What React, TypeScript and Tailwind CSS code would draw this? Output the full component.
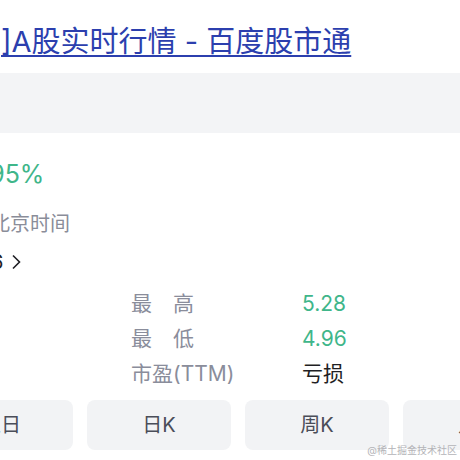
const labelCls = "text-[21px] text-[#8a8d9b]";

const stats = [
  { label: "最\u3000高", value: "5.28", tone: "text-[#3fb68a]" },
  { label: "最\u3000低", value: "4.96", tone: "text-[#3fb68a]" },
  { label: "市盈(TTM)", value: "亏损", tone: "text-[#1f1f24]" },
];

const periods = ["五日", "日K", "周K", "月K"];

export default function App() {
  return (
    <div
      className="relative w-[460px] h-[460px] overflow-hidden bg-white"
      style={{ fontFamily: 'Inter, "Noto Sans CJK SC", sans-serif' }}
    >
      {/* page title link */}
      <div className="h-[73px] pt-[22px] whitespace-nowrap">
        <a className="block ml-[1px] text-[29px] leading-[40px] text-[#2c3fae] underline underline-offset-[3px] decoration-[2px]">
          ]A股实时行情 - 百度股市通
        </a>
      </div>

      {/* search bar */}
      <div className="h-[60px] bg-[#f3f4f6]" />

      <div className="mt-[27px] h-[30px] flex items-center whitespace-nowrap">
        <span className="-ml-[33px] text-[25px] text-[#3fb68a]">0.95%</span>
      </div>

      <div className="mt-[19px] h-[30px] flex items-center whitespace-nowrap">
        <span className="-ml-[10px] text-[20px] text-[#8a8d99]">北京时间</span>
      </div>

      <div className="mt-[8px] h-[30px] flex items-center whitespace-nowrap">
        <span className="-ml-[9px] text-[20px] text-[#1f1f24]">6</span>
        <svg className="ml-[8px]" width="10" height="16" viewBox="0 0 10 16" fill="none">
          <path d="M2 1.5 L8.5 8 L2 14.5" stroke="#1f1f24" strokeWidth="1.6" />
        </svg>
      </div>

      {/* stats */}
      <div className="mt-[9px] ml-[131px]">
        {stats.map((s) => (
          <div key={s.label} className="h-[35px] flex items-center whitespace-nowrap">
            <span className={`w-[171px] ${labelCls}`}>{s.label}</span>
            <span className={`text-[21px] ${s.tone}`}>{s.value}</span>
          </div>
        ))}
      </div>

      {/* period tabs */}
      <div className="mt-[9px] -ml-[71px] flex gap-[14px]">
        {periods.map((p) => (
          <div
            key={p}
            className="shrink-0 w-[144px] h-[50px] rounded-[8px] bg-[#f2f3f5] flex items-center justify-center text-[20px] text-[#4a4d59]"
          >
            {p}
          </div>
        ))}
      </div>

      <div className="absolute right-[3px] bottom-[4px] text-[10px] leading-[12px] text-[#b4b4b8] whitespace-nowrap">
        @稀土掘金技术社区
      </div>
    </div>
  );
}
